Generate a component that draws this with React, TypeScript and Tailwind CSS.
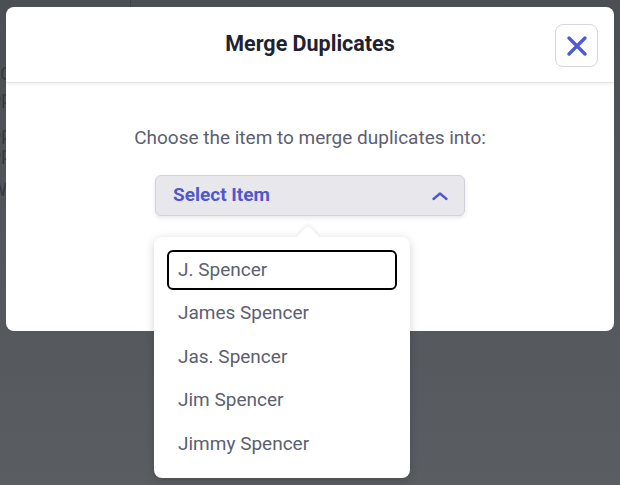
import React from 'react';

const items = ['J. Spencer', 'James Spencer', 'Jas. Spencer', 'Jim Spencer', 'Jimmy Spencer'];

const BackgroundPage: React.FC = () => (
  <div className="absolute inset-0 overflow-hidden bg-gradient-to-b from-[#4b4e52] to-[#5a5d61]">
    <div className="absolute left-[130px] top-0 h-[8px] border-l border-[#3e4145]" />
    <div className="flex flex-col -ml-[9px] pt-[64px] text-[18px] leading-[20px] text-[#36393d]">
      <span className="h-[24px]">LC</span>
      <span className="h-[36px]">op</span>
      <span className="h-[20px]">op</span>
      <span className="h-[36px]">op</span>
      <span>W</span>
    </div>
  </div>
);

const SelectDropdown: React.FC = () => (
  <div className="relative w-[310px]">
    <button className="w-full h-[41px] flex items-center justify-between pl-[17px] pr-[15px] rounded-[6px] bg-[#e8e8ec] border border-[#d2d2de] shadow-[0_2px_4px_rgba(60,60,90,0.12)]">
      <span className="text-[19px] font-bold text-[#5058cf]">Select Item</span>
      <svg width="18" height="12" viewBox="0 0 18 12" fill="none">
        <path d="M2.5 9L9 3.5L15.5 9" stroke="#5058cf" strokeWidth="2.4" strokeLinecap="round" strokeLinejoin="round" />
      </svg>
    </button>

    {/* popover */}
    <div className="absolute left-[-1px] top-[62px] w-[256px] bg-white rounded-[8px] shadow-[0_2px_10px_rgba(0,0,0,0.18)] px-[13px] pt-[13px] pb-[14px]">
      <div className="absolute left-[146px] -top-[8px] w-[16px] h-[16px] bg-white rotate-45 rounded-[2px] shadow-[-2px_-2px_4px_rgba(0,0,0,0.06)]" />
      <ul className="relative flex flex-col gap-[3.5px]">
        {items.map((name, i) => (
          <li
            key={name}
            className={`h-[40px] flex items-center px-[9px] rounded-[6px] text-[19px] text-[#5c6071] ${i === 0 ? 'border-2 border-black' : 'border-2 border-transparent'}`}
          >
            {name}
          </li>
        ))}
      </ul>
    </div>
  </div>
);

export default function App() {
  return (
    <div className="relative w-[620px] h-[485px] overflow-hidden font-['Roboto','Liberation_Sans',sans-serif]">
      <BackgroundPage />
      <div className="relative pt-[7px] px-[6px]">
        <div className="w-[608px] h-[324px] bg-white rounded-[8px] flex flex-col">
          <div className="relative h-[76px] flex items-center justify-center border-b border-[#e6e6ea] shadow-[0_2px_3px_rgba(0,0,0,0.05)]">
            <h2 className="text-[21.5px] font-bold text-[#1f2230]">Merge Duplicates</h2>
            <button className="absolute right-[16px] top-[17px] w-[43px] h-[43px] rounded-[8px] border border-[#d6d6de] flex items-center justify-center bg-white">
              <svg width="22" height="22" viewBox="0 0 22 22" fill="none">
                <path d="M3 3L19 19M19 3L3 19" stroke="#4f5bd5" strokeWidth="3.4" strokeLinecap="round" />
              </svg>
            </button>
          </div>
          <div className="flex flex-col items-center pt-[42px]">
            <p className="text-[19px] text-[#5c6071] leading-[26px]">Choose the item to merge duplicates into:</p>
            <div className="mt-[24px]">
              <SelectDropdown />
            </div>
          </div>
        </div>
      </div>
    </div>
  );
}
